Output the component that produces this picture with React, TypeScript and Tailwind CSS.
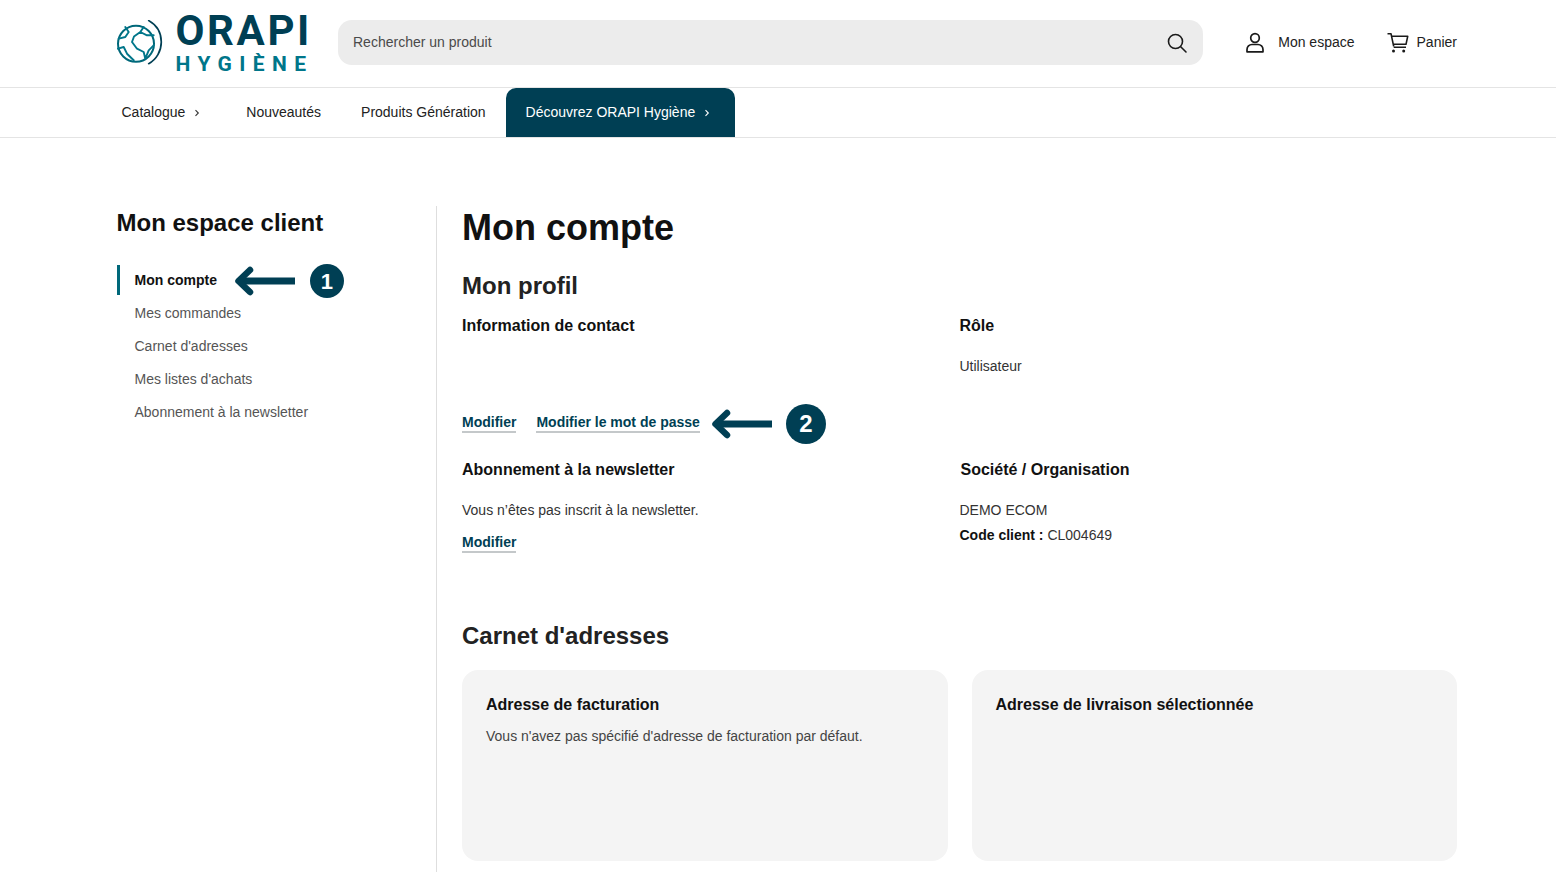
const font = "[font-family:'Liberation_Sans',Arial,sans-serif]";

function Logo() {
  return (
    <div className="flex items-center gap-[12px] translate-y-[1px]">
      <svg width="47" height="48" viewBox="0 0 47 48" fill="none" className="shrink-0">
        <circle cx="19" cy="23.7" r="18" stroke="#00687a" strokeWidth="2" />
        <path d="M26.7 7 23.3 12 17 16.5 15 22l5 6.7 6.7 3.3 1.6 6.7 3.4-8.4 5-5M23.3 12 30 15.3h6.7" stroke="#00768a" strokeWidth="1.9" strokeLinejoin="round" strokeLinecap="round" />
        <path d="M1.7 18.7 8.3 17l3.4-5-3.4-5M.9 28.7 6.7 27l3.3 6.7 6.7 6.6" stroke="#00768a" strokeWidth="1.9" strokeLinejoin="round" strokeLinecap="round" />
        <path d="M31.7 .6C39.5 5 44.3 13 44.3 22S39.5 39.5 31.7 43.7" stroke="#003f54" strokeWidth="1.7" strokeLinecap="round" />
      </svg>
      <div className="flex flex-col w-[134px] [font-family:Roboto,sans-serif] font-bold">
        <span className="text-[42px] leading-[38px] tracking-[2.6px] text-[#003f54] whitespace-nowrap h-[38px]">ORAPI</span>
        <span className="text-[21px] leading-[22px] tracking-[7.4px] text-[#00768a] whitespace-nowrap mt-[3px]">HYGIÈNE</span>
      </div>
    </div>
  );
}

function Chevron({ className }: { className: string }) {
  return (
    <svg width="8" height="8" viewBox="0 0 8 8" fill="none" className={className}>
      <path d="M2.5 1.2 5.3 4 2.5 6.8" stroke="currentColor" strokeWidth="1.1" />
    </svg>
  );
}

function Arrow() {
  return (
    <svg width="62" height="32" viewBox="0 0 62 32" fill="none" className="shrink-0">
      <path d="M61 16H6" stroke="#003f54" strokeWidth="7" />
      <path d="M16 5 4.5 16 16 27" stroke="#003f54" strokeWidth="6.5" strokeLinecap="round" strokeLinejoin="round" />
    </svg>
  );
}

function Badge({ n, size }: { n: string; size: string }) {
  return (
    <span className={`${size} rounded-full bg-[#003f54] text-white font-bold flex items-center justify-center shrink-0`}>{n}</span>
  );
}

function EditLink({ children }: { children: string }) {
  return (
    <a className="text-[14px] leading-[17px] font-bold text-[#003f54] border-b-2 border-[#c4c8ca] whitespace-nowrap">{children}</a>
  );
}

export default function App() {
  return (
    <div className={`${font} h-[872px] overflow-hidden bg-white text-[#111] flex flex-col`}>
      <header className="h-[88px] border-b border-[#e4e4e4] shrink-0 flex items-center pl-[116.5px] pr-[99px] pb-[2px]">
        <Logo />
        <div className="ml-[28px] w-[865px] h-[45px] rounded-[14px] bg-[#ececec] flex items-center justify-between pl-[15.5px] pr-[15px]">
          <span className="text-[14px] text-[#4a4a4a]">Rechercher un produit</span>
          <svg width="22" height="22" viewBox="0 0 22 22" fill="none" stroke="#1a1a1a" strokeWidth="1.6" strokeLinecap="round">
            <circle cx="9.5" cy="9.5" r="7" />
            <path d="m14.7 14.7 5.3 5.3" />
          </svg>
        </div>
        <div className="ml-auto flex items-center">
          <svg width="20" height="22" viewBox="0 0 20 22" fill="none" stroke="#1a1a1a" strokeWidth="1.7">
            <circle cx="10" cy="6" r="4.3" />
            <path d="M2 19.8v-2.3a5 5 0 0 1 5-5h6a5 5 0 0 1 5 5v2.3z" strokeLinejoin="round" />
          </svg>
          <span className="ml-[13px] text-[14px] text-[#222]">Mon espace</span>
          <svg width="22" height="22" viewBox="0 0 22 22" fill="none" stroke="#1a1a1a" strokeWidth="1.6" className="ml-[32px]">
            <path d="M.5 1.7H4l2.7 12.6M4.6 4.3h16.1l-1.7 8H6.3M6.7 15.2H19" strokeLinejoin="round" />
            <circle cx="6.5" cy="19" r="1.5" fill="#1a1a1a" stroke="none" />
            <circle cx="16.7" cy="19" r="1.5" fill="#1a1a1a" stroke="none" />
          </svg>
          <span className="ml-[8px] text-[14px] text-[#222]">Panier</span>
        </div>
      </header>

      <nav className="h-[50px] border-b border-[#e4e4e4] shrink-0 flex items-start pl-[121.5px] text-[14px] text-[#222]">
        <div className="flex items-center h-[49px]">
          <span>Catalogue</span>
          <Chevron className="ml-[8px] text-[#333]" />
        </div>
        <div className="flex items-center h-[49px] ml-[45px]">Nouveautés</div>
        <div className="flex items-center h-[49px] ml-[40px]">Produits Génération</div>
        <div className="flex items-center ml-[20px] h-[49px] pl-[20px] pr-[24px] rounded-t-[10px] bg-[#003f54] text-white">
          <span>Découvrez ORAPI Hygiène</span>
          <Chevron className="ml-[8px]" />
        </div>
      </nav>

      <div className="flex-1 flex pl-[116.5px] pr-[99px] pt-[68px] min-h-0">
        <aside className="w-[319.5px] shrink-0">
          <h2 className="text-[24px] leading-[34px] font-bold text-[#111]">Mon espace client</h2>
          <div className="mt-[25px] flex items-center h-[30px]">
            <div className="border-l-[3px] border-[#00687a] h-[30px] pl-[15px] flex items-center text-[14px] font-bold text-[#111]">Mon compte</div>
            <div className="ml-[17px] translate-y-[1px]"><Arrow /></div>
            <div className="ml-[14px] translate-y-[1px]"><Badge n="1" size="w-[34px] h-[34px] text-[22px]" /></div>
          </div>
          <ul className="pl-[18px] mt-[2px] text-[14px] text-[#555]">
            <li className="h-[33px] flex items-center">Mes commandes</li>
            <li className="h-[33px] flex items-center">Carnet d'adresses</li>
            <li className="h-[33px] flex items-center">Mes listes d'achats</li>
            <li className="h-[33px] flex items-center">Abonnement à la newsletter</li>
          </ul>
        </aside>

        <main className="flex-1 border-l border-[#dedede] pl-[25px] min-w-0">
          <h1 className="text-[36px] leading-[44px] font-bold text-[#111]">Mon compte</h1>
          <h2 className="mt-[21px] text-[24px] leading-[30px] font-bold text-[#222]">Mon profil</h2>

          <div className="mt-[13px] grid grid-cols-[497.5px_1fr]">
            <div>
              <h3 className="text-[16px] leading-[24px] font-bold text-[#111]">Information de contact</h3>
              <div className="mt-[66px] flex items-center h-[40px] -mb-[1px]">
                <div className="flex items-center gap-[20px] pb-[2px]">
                  <EditLink>Modifier</EditLink>
                  <EditLink>Modifier le mot de passe</EditLink>
                </div>
                <div className="ml-[11px]"><Arrow /></div>
                <div className="ml-[13px]"><Badge n="2" size="w-[40px] h-[40px] text-[24px]" /></div>
              </div>
            </div>
            <div>
              <h3 className="text-[16px] leading-[24px] font-bold text-[#111]">Rôle</h3>
              <p className="mt-[16px] text-[14px] leading-[24px] text-[#333]">Utilisateur</p>
            </div>
          </div>

          <div className="mt-[15px] grid grid-cols-[497.5px_1fr]">
            <div>
              <h3 className="text-[16px] leading-[24px] font-bold text-[#111]">Abonnement à la newsletter</h3>
              <p className="mt-[16px] text-[14px] leading-[24px] text-[#333]">Vous n’êtes pas inscrit à la newsletter.</p>
              <div className="mt-[12px] flex"><EditLink>Modifier</EditLink></div>
            </div>
            <div>
              <h3 className="text-[16px] leading-[24px] font-bold text-[#111] ml-px">Société / Organisation</h3>
              <p className="mt-[16px] text-[14px] leading-[24px] text-[#333]">DEMO ECOM</p>
              <p className="mt-[1px] text-[14px] leading-[24px] text-[#333]"><b className="text-[#111]">Code client :</b> CL004649</p>
            </div>
          </div>

          <h2 className="mt-[68px] text-[24px] leading-[30px] font-bold text-[#222]">Carnet d'adresses</h2>

          <div className="mt-[19px] grid grid-cols-2 gap-[24px]">
            <div className="h-[191px] rounded-[16px] bg-[#f4f4f4] px-[24px] pt-[23px]">
              <h3 className="text-[16px] leading-[24px] font-bold text-[#111]">Adresse de facturation</h3>
              <p className="mt-[7px] text-[14px] leading-[24px] text-[#444]">Vous n'avez pas spécifié d'adresse de facturation par défaut.</p>
            </div>
            <div className="h-[191px] rounded-[16px] bg-[#f4f4f4] px-[24px] pt-[23px]">
              <h3 className="text-[16px] leading-[24px] font-bold text-[#111]">Adresse de livraison sélectionnée</h3>
            </div>
          </div>
        </main>
      </div>
    </div>
  );
}
